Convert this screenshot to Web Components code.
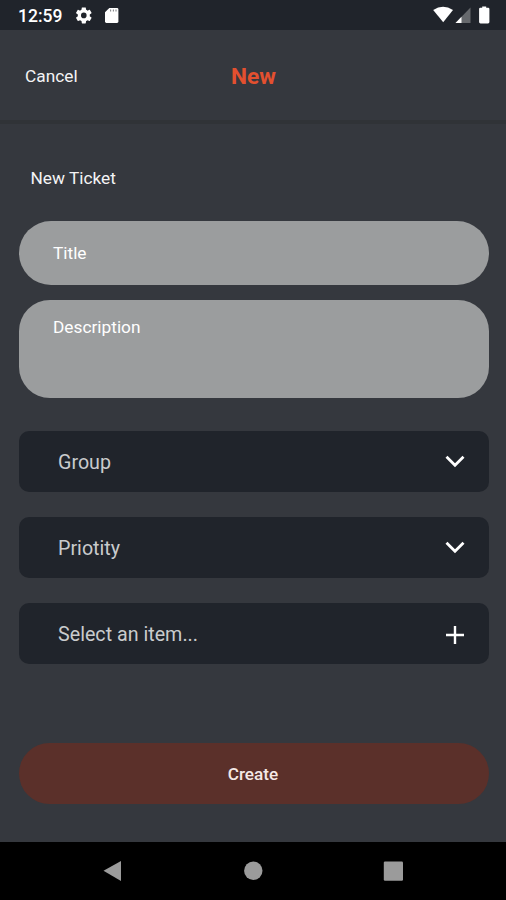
<!DOCTYPE html>
<html lang="en">
<head>
<meta charset="utf-8">
<title>New Ticket</title>
<style>
html,body{margin:0;height:100%;background:#35383e}
body{font-family:Roboto,"Liberation Sans",sans-serif;color:#f4f4f5;overflow:hidden}
</style>
</head>
<body>
<ticket-screen></ticket-screen>
<script>
const define = (name, html) => customElements.define(name, class extends HTMLElement {
  constructor() {
    super();
    const t = document.createElement('template');
    t.innerHTML = html;
    this.attachShadow({mode: 'open'}).append(t.content.cloneNode(true));
  }
});

define('status-bar', `
<style>
:host{display:flex;align-items:flex-start;justify-content:space-between;height:30px;box-sizing:border-box;background:#20242b;padding:0 15px 0 18px}
div{display:flex;height:30px}
span{font-size:17.5px;font-weight:500;line-height:32px;width:58px;color:#fff}
svg{display:block}
</style>
<div><span>12:59</span>
<svg width="46" height="30" viewBox="76 0 46 30" fill="#fff"><path transform="translate(74.2 5.800) scale(.8)" fill-rule="evenodd" d="M19.43 12.98c.04-.32.07-.64.07-.98s-.03-.66-.07-.98l2.11-1.65c.19-.15.24-.42.12-.64l-2-3.46c-.12-.22-.39-.3-.61-.22l-2.49 1c-.52-.4-1.08-.73-1.69-.98l-.38-2.65C14.46 2.18 14.25 2 14 2h-4c-.25 0-.46.18-.49.42l-.38 2.65c-.61.25-1.17.59-1.69.98l-2.49-1c-.23-.09-.49 0-.61.22l-2 3.46c-.13.22-.07.49.12.64l2.11 1.65c-.04.32-.07.65-.07.98s.03.66.07.98l-2.11 1.65c-.19.15-.24.42-.12.64l2 3.46c.12.22.39.3.61.22l2.49-1c.52.4 1.08.73 1.69.98l.38 2.65c.03.24.24.42.49.42h4c.25 0 .46-.18.49-.42l.38-2.65c.61-.25 1.17-.59 1.69-.98l2.49 1c.23.09.49 0 .61-.22l2-3.46c.12-.22.07-.49-.12-.64zM12 15.5a3.5 3.5 0 1 1 0-7 3.5 3.5 0 0 1 0 7z"/>
<path d="M109.3 8H117q1.400 0 1.400 1.400v12.200q0 1.400-1.400 1.400h-10.600q-1.400 0-1.400-1.400V12.200z"/><path stroke="#85878a" stroke-width="1.100" d="M110.600 9.400v2M113.400 9.400v2M116 9.400v2"/></svg></div>
<svg width="58" height="30" viewBox="433 0 58 30" fill="#fff"><path d="M433.200 10Q443 3.300 453 10L443.200 22.300z"/><path fill="#66696d" d="M470.500 7.500V23H455.500z"/><path d="M461.500 16.800V23H455.500z"/><path d="M482.200 7.700v-1.200h4v1.200h2q1.200 0 1.200 1.200V22q0 1.400-1.400 1.400h-7.500q-1.400 0-1.400-1.400V8.900q0-1.200 1.200-1.200z"/></svg>`);

define('app-header', `
<style>
:host{display:grid;grid-template-columns:1fr auto 1fr;align-items:center;height:94px;box-sizing:border-box;border-bottom:4px solid #303337;padding:2px 24px 0 25px}
.action{font-size:17.300px}
.title{font-size:22.700px;font-weight:700;color:#e3502f;padding-top:1px}
</style>
<div class="action"><slot name="action"></slot></div><div class="title"><slot></slot></div>`);

define('text-field', `
<style>
:host{display:block;box-sizing:border-box;height:64px;border-radius:32px;background:#9b9d9e;padding:21px 34.500px 0;font-size:17.300px;line-height:22px;color:#fff}
:host([multiline]){height:98.500px;border-radius:31px;padding-top:16px}
</style><slot></slot>`);

define('picker-row', `
<style>
:host{display:flex;align-items:center;justify-content:space-between;box-sizing:border-box;height:61px;border-radius:10px;background:#20242b;padding:2px 20px 0 39.500px;font-size:19.700px;color:#c9cbcd}
svg{display:block;fill:none;stroke:#fff;stroke-width:2.800}
.plus{display:none}
:host([icon=plus]) .plus{display:block;stroke-width:2.400}
:host([icon=plus]) .chevron{display:none}
</style>
<slot></slot>
<svg class="chevron" width="28" height="28" viewBox="0 0 28 28"><path d="M5.500 8.700L14 17.300L22.500 8.700"/></svg>
<svg class="plus" width="28" height="28" viewBox="0 0 28 28"><path d="M14 6v18M5 15h18"/></svg>`);

define('pill-button', `
<style>
:host{display:flex;align-items:center;justify-content:center;box-sizing:border-box;height:61px;border-radius:31px;background:#5b302a;font-size:17.200px;font-weight:500;padding:0 1px 0 0;color:#f5e9e6}
</style><slot></slot>`);

define('nav-bar', `
<style>
:host{display:flex;height:58px;background:#000}
svg{display:block;fill:#9b9b9b}
</style>
<svg width="506" height="58" viewBox="0 842 506 58"><path d="M103.500 870.800L121 861V881z"/><circle cx="253.300" cy="870.800" r="9.200"/><rect x="383.800" y="861.500" width="19.200" height="19.300" rx="1.200"/></svg>`);

define('ticket-screen', `
<style>
:host{display:flex;flex-direction:column;width:506px;height:900px;background:#35383e}
main{flex:1;display:flex;flex-direction:column;padding:0 17.500px 0 18.500px}
h2{margin:43px 0 31px 12px;font-size:17.300px;font-weight:400;line-height:23px}
text-field+text-field{margin-top:14.500px}
.pickers{display:grid;gap:25px;margin-top:32.500px}
pill-button{margin-top:79.500px}
</style>
<status-bar></status-bar>
<app-header><span slot="action">Cancel</span>New</app-header>
<main>
<h2>New Ticket</h2>
<text-field>Title</text-field>
<text-field multiline>Description</text-field>
<div class="pickers">
<picker-row>Group</picker-row>
<picker-row>Priotity</picker-row>
<picker-row icon="plus">Select an item...</picker-row>
</div>
<pill-button>Create</pill-button>
</main>
<nav-bar></nav-bar>`);
</script>
</body>
</html>
